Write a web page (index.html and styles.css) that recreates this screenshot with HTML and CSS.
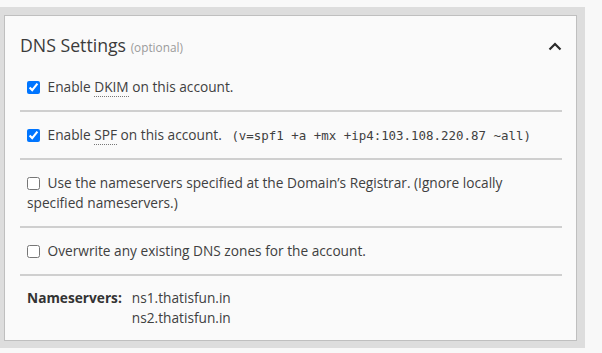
FILE: index.html
```html
<!DOCTYPE html>
<html lang="en">
<head>
    <meta charset="UTF-8">
    <title>DNS Settings</title>
    <link rel="stylesheet" href="styles.css">
</head>
<body>
    <div class="frame">
        <div class="panel">
            <div class="panel-head">
                <h2>DNS Settings <span class="optional">(optional)</span></h2>
                <svg class="chevron" width="14" height="9" viewBox="0 0 14 9">
                    <polyline points="1.5,7.5 7,2 12.5,7.5" fill="none" stroke="#2b2b2b" stroke-width="2.2"/>
                </svg>
            </div>

            <div class="row">
                <label><input type="checkbox" checked> Enable <abbr title="DomainKeys Identified Mail">DKIM</abbr> on this account.</label>
            </div>
            <div class="row">
                <label><input type="checkbox" checked> Enable <abbr title="Sender Policy Framework">SPF</abbr> on this account.</label>
                <code class="spf">(v=spf1 +a +mx +ip4:103.108.220.87 ~all)</code>
            </div>
            <div class="row">
                <label><input type="checkbox"> Use the nameservers specified at the Domain’s Registrar. (Ignore locally specified nameservers.)</label>
            </div>
            <div class="row">
                <label><input type="checkbox"> Overwrite any existing DNS zones for the account.</label>
            </div>

            <div class="ns">
                <span class="ns-label">Nameservers:</span>
                <div class="ns-list">
                    <div>ns1.thatisfun.in</div>
                    <div>ns2.thatisfun.in</div>
                </div>
            </div>
        </div>
    </div>
</body>
</html>
```

FILE: styles.css
```css
* {
    box-sizing: border-box;
}

body {
    margin: 0;
    background-color: #f8f8f8;
    font-family: 'Open Sans', 'Noto Sans', sans-serif;
    color: #404040;
    font-size: 13.7px;
    line-height: 20px;
}

.frame {
    width: 585px;
    margin-top: 7px;
    padding: 8px 8px 7px 4px;
    background-color: #dddddd;
}

.panel {
    background-color: #fafafa;
    border: 1px solid #bfbfbf;
    padding: 0 14px 0 15px;
}

.panel-head {
    display: flex;
    align-items: center;
    justify-content: space-between;
    height: 48px;
    padding-top: 12px;
}

h2 {
    margin: 0;
    font-size: 17.7px;
    font-weight: normal;
    line-height: 24px;
    color: #3a3a3a;
}

.optional {
    font-size: 11.8px;
    color: #9a9a9a;
}

.row {
    padding: 13px 0 13px 7px;
    border-bottom: 2px solid #cfcfcf;
}

.row input[type="checkbox"] {
    width: 13px;
    height: 13px;
    margin: 0 4px 0 0;
    vertical-align: -2px;
}

abbr {
    text-decoration: none;
    border-bottom: 1px dotted #777;
}

.spf {
    font-family: 'DejaVu Sans Mono', monospace;
    font-size: 12.45px;
    line-height: 1;
    margin-left: 6px;
}

.ns {
    display: flex;
    gap: 10px;
    padding: 12px 0 12px 7px;
}

.ns-label {
    font-weight: bold;
    color: #333;
}
```
